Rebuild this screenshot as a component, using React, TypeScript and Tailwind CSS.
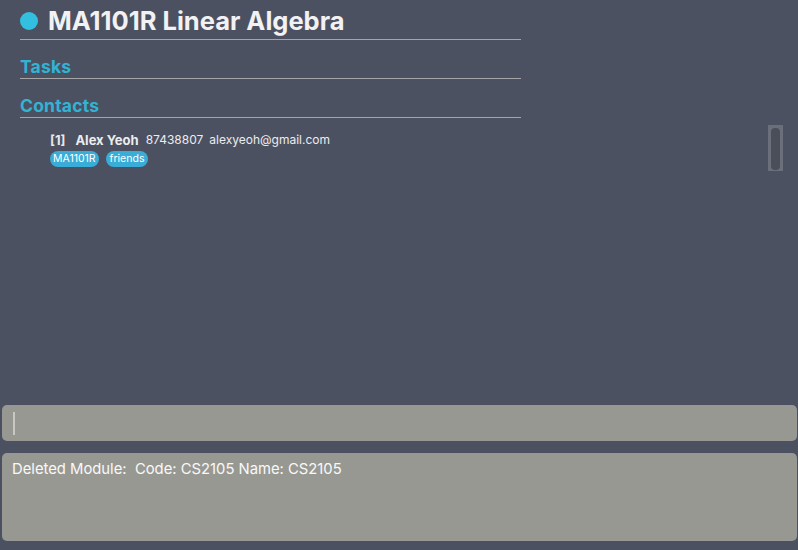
import React from "react";

export default function App() {
  const font = { fontFamily: "Inter, 'Noto Sans', sans-serif" };
  return (
    <div className="w-[798px] h-[550px] bg-[#4b5161] flex flex-col overflow-hidden" style={font}>
      <div className="flex-1 flex flex-col">
        <div className="px-5">
          <div className="w-[501px] flex items-center gap-[10px] pt-[3px] h-[40px] border-b border-[#a3a5a9]">
            <div className="w-[18px] h-[18px] rounded-full bg-[#33c0e0]" />
            <div className="text-[25.5px] font-bold text-[#f2f2f4] tracking-[0px] leading-[32px]">MA1101R Linear Algebra</div>
          </div>
          <div className="w-[501px] h-[39px] flex items-end pb-[1px] border-b border-[#a3a5a9]">
            <div className="text-[17.5px] font-bold text-[#33b3d4] leading-[20px] tracking-[0.2px]">Tasks</div>
          </div>
          <div className="w-[501px] h-[39px] flex items-end pb-[1px] border-b border-[#a3a5a9]">
            <div className="text-[17.5px] font-bold text-[#33b3d4] leading-[20px] tracking-[0.2px]">Contacts</div>
          </div>
        </div>
        <div className="flex flex-row pt-[7px]">
          <div className="pl-[50px] flex flex-col gap-[3px] pt-[7px]">
            <div className="flex items-center text-[#ececee] leading-[16px]">
              <span className="text-[13px] font-bold text-[#e8e8ea]">[1]</span>
              <span className="text-[13px] font-bold ml-[10px]">Alex Yeoh</span>
              <span className="text-[12px] ml-[7px]">87438807</span>
              <span className="text-[12px] ml-[6px]">alexyeoh@gmail.com</span>
            </div>
            <div className="flex gap-[7px]">
              <span className="h-[16px] px-[3px] rounded-full bg-[#39acd7] text-white text-[10.5px] leading-[16px]">MA1101R</span>
              <span className="h-[16px] px-[4px] rounded-full bg-[#39acd7] text-white text-[10.5px] leading-[16px]">friends</span>
            </div>
          </div>
          <div className="ml-auto mr-[15px] w-[15px] h-[46px] bg-[#6b6f7c] p-[3px] pb-[1px]">
            <div className="w-full h-full rounded-[4px] bg-[#4a4e59]" />
          </div>
        </div>
      </div>
      <div className="mx-[2px] mr-[1px] h-[36px] rounded-[5px] bg-[#989893] flex items-center pl-[11px]">
        <div className="w-[2px] h-[23px] bg-[#c8c8c3]" />
      </div>
      <div className="mx-[2px] mr-[1px] mt-[12px] mb-[9px] h-[88px] rounded-[5px] bg-[#989893] px-[10px] pt-[6px]">
        <div className="text-[14.8px] text-[#f8f8f8] leading-[20px] whitespace-pre">Deleted Module:  Code: CS2105 Name: CS2105</div>
      </div>
    </div>
  );
}
